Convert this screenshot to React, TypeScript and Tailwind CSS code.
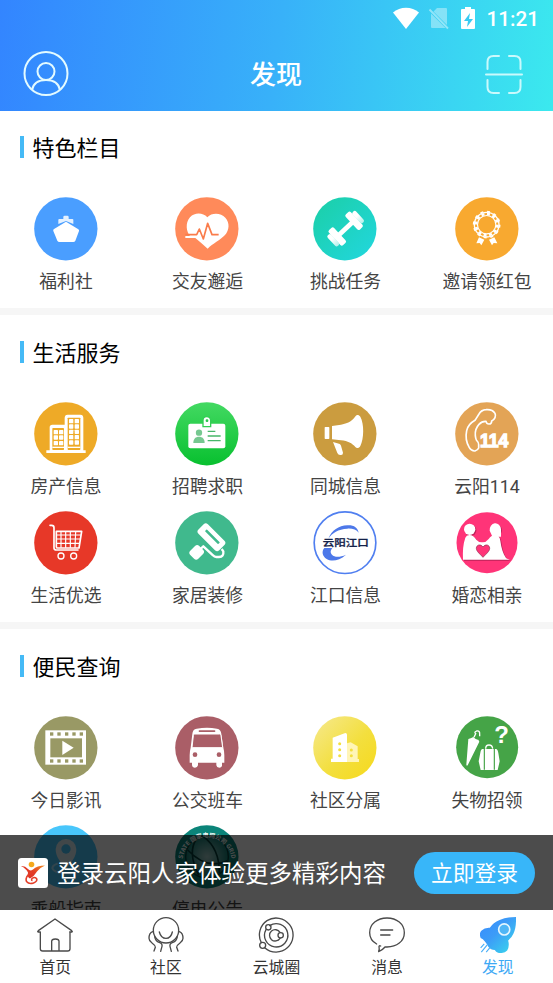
import type { ReactNode } from "react";

type Entry = { label: string; icon: ReactNode };

function Disc({ x, y, fill, children }: { x: number; y: number; fill: string; children?: ReactNode }) {
  return (
    <svg className="block size-16" viewBox={`${x} ${y} 192 192`}>
      <circle cx={x + 95.5} cy={y + 95.5} r="95" fill={fill} />
      {children}
    </svg>
  );
}

const ship = (
  <Disc x={101} y={216} fill="#4a9eff">
    <path d="M174 297v-13q0-2 3-2h12v-6q0-4 4-4h8q4 0 4 4v6h11q3 0 3 2v13l-22-9z" fill="#e4f1ff" />
    <path d="M197 290l37 23q3 2 2 5l-11 29q-2 4-6 4h-42q-4 0-6-4l-12-29q-1-3 1-5z" fill="#fff" />
  </Disc>
);

const heart = (
  <Disc x={525} y={216} fill="#ff8a5a">
    <path d="M622 277c14-15 41-13 54 1 14 15 12 38-1 52-14 15-37 26-52 41-14-13-25-22-37-32h-30v-6h14c-11-12-15-39 0-56 14-15 38-15 52 0z" fill="#fff" />
    <path d="M556 329h34l8-17 12 30 13-47 13 34h20" fill="none" stroke="#fa7c4b" strokeWidth="5" strokeLinejoin="round" />
  </Disc>
);

const dumbbell = (
  <Disc x={111} y={216} fill="url(#teal)">
    <defs>
      <linearGradient id="teal" x1="0" y1="0" x2="1" y2="1">
        <stop offset="0" stopColor="#1bcfa6" />
        <stop offset="1" stopColor="#22d7df" />
      </linearGradient>
      <linearGradient id="dumbShade" x1="0" y1="0" x2="0" y2="1">
        <stop offset="0.4" stopColor="#fff" />
        <stop offset="1" stopColor="#b4f0ea" />
      </linearGradient>
    </defs>
    <g transform="rotate(-43 209 311)" fill="#fff">
      <rect x="180" y="304" width="58" height="14" />
      <rect x="164" y="280" width="21" height="62" rx="6" />
      <rect x="233" y="280" width="21" height="62" rx="6" />
      <rect x="151" y="289" width="14" height="44" rx="6" fill="url(#dumbShade)" />
      <rect x="253" y="289" width="14" height="44" rx="6" fill="url(#dumbShade)" />
    </g>
  </Disc>
);

const medal = (
  <Disc x={536} y={216} fill="#f8a930">
    <g fill="none" stroke="#fff">
      <circle cx="631" cy="299" r="27.500" strokeWidth="3.500" />
      <circle cx="631" cy="299" r="37" strokeWidth="4" />
      <circle cx="631" cy="299" r="32" strokeWidth="8" strokeDasharray="9 7.750" />
      <circle cx="631" cy="299" r="39" strokeWidth="5" strokeDasharray="9 11.420" />
    </g>
    <path d="M608 337l16 7-9 17-5-7-10 1zM654 337l-16 7 9 17 5-7 11 1z" fill="#fff" />
  </Disc>
);

const buildings = (
  <Disc x={101} y={36} fill="#eeaa27">
    <path d="M138 181h10v-69q0-8 8-8h37v-20q0-10 9-10h38q9 0 9 10v97h7v8H138z" fill="#fff" />
    <g fill="#eeaa27">
      <rect x="156" y="114" width="35" height="66" rx="2" />
      <rect x="202" y="83" width="38" height="97" rx="2" />
    </g>
    <g fill="#fff">
      {[120, 136, 153].map((y) => [160, 176].map((x) => <rect key={`${x}-${y}`} x={x} y={y} width="13" height="13" rx="2" />))}
      {[87, 103, 119, 135, 151].map((y) => [206, 223].map((x) => <rect key={`${x}-${y}`} x={x} y={y} width="13" height="13" rx="2" />))}
      <rect x="156" y="170" width="35" height="4" />
      <rect x="202" y="170" width="38" height="4" />
    </g>
  </Disc>
);

const badge = (
  <Disc x={525} y={36} fill="url(#green)">
    <defs>
      <linearGradient id="green" x1="0" y1="0" x2="0" y2="1">
        <stop offset="0" stopColor="#43d962" />
        <stop offset="1" stopColor="#08c02f" />
      </linearGradient>
    </defs>
    <rect x="565" y="101" width="111" height="74" rx="6" fill="#fff" />
    <path d="M609 110V91q0-11 11-11t12 11v19z" fill="#fff" stroke="#33ce55" strokeWidth="4" />
    <rect x="617" y="88" width="8" height="8" rx="3" fill="#2fc650" />
    <g fill="#76c890">
      <circle cx="597" cy="128" r="9.500" />
      <path d="M580 159c0-13 7-19 17-19s17 6 17 19z" />
    </g>
    <path d="M623 124h23M623 138h39M623 152h39" stroke="#48b76a" strokeWidth="4" />
  </Disc>
);

const megaphone = (
  <Disc x={111} y={36} fill="#cb9c3f">
    <g fill="#fff">
      <rect x="146" y="111" width="14" height="36" rx="2" />
      <path d="M168 108l27-4c24-4 35-13 44-26 3-5 10-4 14 2 12 22 11 66 0 88-4 7-11 8-15 3-10-11-22-18-43-20l-27-3z" />
      <path d="M171 156l18 5c3 1 5 2 6 6l6 21q0 8-7 7-7 1-10-6z" />
    </g>
  </Disc>
);

const hotline = (
  <Disc x={536} y={36} fill="#e3a456">
    <path d="M596 91l12-19q7-12 21-13 19-2 27 11 3 6 0 13-3 7-10 10 0 10-9 9-6 0-8-8-12-1-21 9-13 14-11 34 1 9 3 13 7 7 7 14v10q-3 7-11 9-10 1-17-10-14-23-8-51 4-19 25-31z" fill="none" stroke="#fff" strokeWidth="5" strokeLinejoin="round" />
    <text x="611" y="170" fontSize="56" fontWeight="700" textLength="85" lengthAdjust="spacingAndGlyphs" stroke="#fff" strokeWidth="4" fill="#fff" className="font-['Liberation_Sans']">114</text>
  </Disc>
);

const cart = (
  <Disc x={101} y={33} fill="#e73828">
    <g fill="none" stroke="#fff" strokeLinecap="round" strokeLinejoin="round">
      <path d="M149 76h5q7 0 7 7v61q0 6 7 6h65" strokeWidth="5" />
      <path d="M168 94h76l-8 50h-64q-4 0-4-4z" strokeWidth="5" />
      <path d="M169 105h72M169 117h71M169 130h68M182 95v47M196 95v47M210 95v47M226 95l-2 47" strokeWidth="3.500" />
      <circle cx="182" cy="168" r="9" strokeWidth="4" />
      <circle cx="220" cy="168" r="9" strokeWidth="4" />
    </g>
  </Disc>
);

const roller = (
  <Disc x={525} y={33} fill="#40b98d">
    <g transform="rotate(45 635 111)">
      <rect x="591" y="92" width="88" height="40" rx="9" fill="#fff" />
      <rect x="608" y="105" width="56" height="8" rx="2" fill="#40b98d" />
    </g>
    <path d="M665 147l5 7q2 16-13 17h-8q-6 0-10-5l-29-27-12 11" fill="none" stroke="#fff" strokeWidth="7" strokeLinejoin="round" />
    <rect x="573" y="138" width="34" height="38" rx="9" transform="rotate(45 590 157)" fill="#fff" />
  </Disc>
);

const jiangkou = (
  <Disc x={111} y={33} fill="#fff">
    <circle cx="207" cy="128" r="92.500" fill="none" stroke="#507ff0" strokeWidth="5" />
    <path d="M157 116c10-25 31-39 57-40 20-1 31 7 34 22-7-9-19-13-34-12-27 1-46 13-57 30z" fill="#4d78e9" />
    <path d="M145 144c-9 10-6 25 7 33 15 9 37 6 58-13-18 8-34 9-42 0-7-7-3-15 1-20z" fill="#4d78e9" />
    <g transform="translate(140 139) scale(1 .85)">
      <text fontSize="34" fontWeight="500" textLength="138" lengthAdjust="spacingAndGlyphs" fill="#132149" stroke="#132149" strokeWidth="1" className="font-['Noto_Sans_CJK_SC']">云阳江口</text>
    </g>
  </Disc>
);

const couple = (
  <svg className="block size-16" viewBox="536 33 192 192">
    <circle cx="632" cy="128" r="91.500" fill="#ff3478" />
    <g transform="translate(3 3)" fill="#8f1643" opacity=".6">
      <circle cx="580" cy="88" r="17" />
      <circle cx="657" cy="88" r="17" />
      <path d="M560 179c-1-26 0-46 7-66q3-8 12-8c9 0 15 5 21 14q8 9 18 8 10 1 19-10 8-12 20-12 13 0 15 17c3 22 8 38 17 52q4 4 12 5z" />
    </g>
    <g fill="#fff">
      <circle cx="580" cy="88" r="17" />
      <path d="M640 92a17 20 0 1 1 34-4v22h-26q-4-10-8-18z" />
      <path d="M560 179c-1-26 0-46 7-66q3-8 12-8c9 0 15 5 21 14q8 9 18 8 10 1 19-10 8-12 20-12 13 0 15 17c3 22 8 38 17 52q4 4 12 5z" />
    </g>
    <path d="M620 172c-9-10-20-18-20-27 0-11 13-14 20-4 7-10 20-7 20 4 0 9-11 17-20 27z" fill="#ff3478" stroke="#8d2149" strokeWidth="2" />
  </svg>
);

const film = (
  <Disc x={101} y={48} fill="#999965">
    <rect x="135" y="91" width="122" height="103" fill="#fff" />
    <rect x="150" y="115" width="95" height="57" fill="#999965" />
    {[149, 171, 194, 216, 238].map((x) => (
      <g key={x} fill="#999965">
        <rect x={x} y="97" width="10" height="10" />
        <rect x={x} y="178" width="10" height="10" />
      </g>
    ))}
    <path d="M186 122l34 21-34 22z" fill="#fff" />
  </Disc>
);

const bus = (
  <Disc x={525} y={48} fill="#aa5e67">
    <path d="M569 188v-22q0-13 3-23l5-41q1-15 13-16 31-5 61 0 12 2 13 16l6 41q3 10 3 23v22h-7v10q-2 5-8 5-8 0-9-7v-8h-55v8q-2 7-9 7-8 0-9-8v-7z" fill="#fff" />
    <path d="M584 102h75q3 0 4 5l5 36h-92l4-36q0-5 4-5z" fill="#aa5e67" stroke="#fff" strokeWidth="3" />
    <rect x="596" y="91" width="50" height="5" rx="2" fill="#aa5e67" />
    <circle cx="585" cy="164" r="7" fill="#aa5e67" />
    <circle cx="657" cy="164" r="7" fill="#aa5e67" />
  </Disc>
);

const community = (
  <Disc x={111} y={48} fill="url(#yellow)">
    <defs>
      <linearGradient id="yellow" x1="0" y1="0" x2="1" y2="1">
        <stop offset="0" stopColor="#f6e990" />
        <stop offset="0.55" stopColor="#f3df3e" />
        <stop offset="1" stopColor="#f6d91b" />
      </linearGradient>
    </defs>
    <path d="M213 186v-56l11-3 21 12v38h4v9z" fill="#fff5b7" />
    <path d="M165 186v-10h5v-63l38-14q5 0 5 5v82z" fill="#fff" />
    <g fill="#f3df3e">
      {[131, 149, 167].map((y) => <circle key={y} cx="191" cy={y} r="4.500" />)}
      {[150, 167].map((y) => <circle key={y} cx="226" cy={y} r="4.500" />)}
    </g>
  </Disc>
);

const lost = (
  <svg className="block size-16" viewBox="536 48 192 192">
    <circle cx="632.500" cy="141.500" r="93" fill="#45a447" />
    <path d="M576 117q7-1 15-6 8 9 15 8l3 6-35 71q-3 3-4-2z" fill="#fff" />
    <path d="M593 112l5-11q-6-4 3-8 10-2 9 10v6" fill="none" stroke="#fff" strokeWidth="4" />
    <path d="M618 147h41q5 0 7 12l4 25-6 26h-51l-6-26 5-26q2-11 6-11z" fill="#fff" />
    <path d="M628 146q0-11 10-11t11 11" fill="none" stroke="#fff" strokeWidth="4" />
    <path d="M624 145v64M654 145v64" stroke="#45a447" strokeWidth="3.500" />
    <text x="654" y="130" fontSize="72" fontWeight="700" fill="#fff" className="font-['Liberation_Sans']">?</text>
  </svg>
);

const pin = (
  <Disc x={101} y={30} fill="#48c6fb">
    <path d="M197 161c-17-21-31-35-31-58a31 31 0 0 1 62 0c0 23-14 37-31 58z" fill="#d9edf5" />
    <circle cx="197" cy="102" r="14" fill="#48c6fb" />
    <path d="M172 145c-35 15-5 30 25 30s60-15 25-30" fill="none" stroke="#a9e5ff" strokeWidth="6" />
  </Disc>
);

const grid = (
  <Disc x={525} y={30} fill="#0b8479">
    <defs>
      <path id="gridArc" d="M547 141a74 74 0 1 1 148 0" />
      <radialGradient id="globe">
        <stop offset="0" stopColor="#a0c8c5" />
        <stop offset="1" stopColor="#147c73" />
      </radialGradient>
    </defs>
    <circle cx="621" cy="125" r="64" fill="url(#globe)" stroke="#063e39" strokeWidth="4" />
    <path d="M590 71q-29 40 6 109M563 105q59 62 119 32M609 64q50 35 49 111" fill="none" stroke="#063e39" strokeWidth="5" />
    <text fontSize="18" fontWeight="700" fill="#fff" className="font-['Noto_Sans_CJK_SC']">
      <textPath href="#gridArc" startOffset="50%" textAnchor="middle">STATE 国家电网公司 GRID</textPath>
    </text>
  </Disc>
);

const sections: { title: string; entries: Entry[] }[] = [
  {
    title: "特色栏目",
    entries: [
      { label: "福利社", icon: ship },
      { label: "交友邂逅", icon: heart },
      { label: "挑战任务", icon: dumbbell },
      { label: "邀请领红包", icon: medal },
    ],
  },
  {
    title: "生活服务",
    entries: [
      { label: "房产信息", icon: buildings },
      { label: "招聘求职", icon: badge },
      { label: "同城信息", icon: megaphone },
      { label: "云阳114", icon: hotline },
      { label: "生活优选", icon: cart },
      { label: "家居装修", icon: roller },
      { label: "江口信息", icon: jiangkou },
      { label: "婚恋相亲", icon: couple },
    ],
  },
  {
    title: "便民查询",
    entries: [
      { label: "今日影讯", icon: film },
      { label: "公交班车", icon: bus },
      { label: "社区分属", icon: community },
      { label: "失物招领", icon: lost },
      { label: "乘船指南", icon: pin },
      { label: "停电公告", icon: grid },
    ],
  },
];

function Section({ title, entries, first }: { title: string; entries: Entry[]; first: boolean }) {
  return (
    <section className={first ? "h-[197px] shrink-0" : "shrink-0 border-t-[7px] border-[#f6f6f6] pb-[2px]"}>
      <div className={first ? "flex h-[86px] items-start pt-[20px] pl-5" : "flex h-[87px] items-start pt-[21px] pl-5"}>
        <div className="flex h-8 items-center gap-[8.500px]">
          <span className="h-[22px] w-1 bg-[#45baf6]" />
          <h2 className="pt-1 text-[22px] leading-8 text-black">{title}</h2>
        </div>
      </div>
      <div className="grid auto-rows-[109px] grid-cols-[141.500px_138px_141.500px_90px] pl-[20.500px]">
        {entries.map((e) => (
          <div key={e.label} className="flex w-[90px] flex-col items-center">
            {e.icon}
            <span className="mt-2 pl-[1px] text-[17.800px] leading-[25px] whitespace-nowrap text-[#444]">{e.label}</span>
          </div>
        ))}
      </div>
    </section>
  );
}

function TabIcon({ box, children }: { box: string; children: ReactNode }) {
  return (
    <svg className="block size-9" viewBox={box} fill="none" stroke="#4a4a4a" strokeWidth="4" strokeLinecap="round" strokeLinejoin="round">
      {children}
    </svg>
  );
}

const tabs: Entry[] = [
  {
    label: "首页",
    icon: (
      <TabIcon box="111 305 108 108">
        <path d="M121 350h-6q-4-1 0-4l50-35 50 35q4 3 0 4h-6M121 350v50q0 7 7 7h75q7 0 7-7v-50M155 406v-28q0-7 11-7t11 7v28" />
      </TabIcon>
    ),
  },
  {
    label: "社区",
    icon: (
      <TabIcon box="443 305 108 108">
        <circle cx="497" cy="345" r="38" />
        <path d="M477 350q5 19 20 19t19-19" />
        <path d="M457 349q-11 4-11 20 0 8 9 14 10 7 10 13l-4 11M463 364q3 15 13 17 11 3 9 12l-4 15M537 349q11 4 11 20 0 8-9 14-10 7-10 13l4 11M531 364q-3 15-13 17-11 3-9 12l4 15" />
      </TabIcon>
    ),
  },
  {
    label: "云城圈",
    icon: (
      <TabIcon box="776 305 108 108">
        <path d="M786 382a51 51 0 0 1 17-66 51 51 0 1 1-7 81" />
        <path d="M811 331a35 35 0 1 1-11 12" />
        <circle cx="807" cy="336" r="8" />
        <circle cx="790" cy="390" r="9" />
        <path d="M842 351a17 17 0 1 0 0 18" />
        <circle cx="844" cy="360" r="8" />
      </TabIcon>
    ),
  },
  {
    label: "消息",
    icon: (
      <TabIcon box="279 305 108 108">
        <path d="M302 386q-21-12-21-34c0-26 23-44 52-44s52 18 52 44-23 43-52 43h-6q-8 10-19 14 3-5 1-15 0-4 5-2M314 344h36M314 359h28" />
      </TabIcon>
    ),
  },
  {
    label: "发现",
    icon: (
      <svg className="block size-9" viewBox="610 303 110 110">
        <defs>
          <linearGradient id="rocket" x1="0" y1="0" x2="1" y2="1">
            <stop offset="0" stopColor="#378aff" />
            <stop offset="0.45" stopColor="#3c9cf7" />
            <stop offset="1" stopColor="#38ddec" />
          </linearGradient>
        </defs>
        <path d="M612 367q-6-14 3-23 9-9 25-8 10-16 30-24 20-9 50-9 1 34-8 51-5 12-16 21 5 18-3 30-9 11-28 7-6-2-10-8-12 0-19-9-5-10-11-17-6-9-13-11z" fill="url(#rocket)" />
        <circle cx="684" cy="341" r="17" fill="#4fb6f6" stroke="#e4f6ff" strokeWidth="5" />
        <path d="M623 385l-11 12M632 388l-18 22M641 396l-12 14" stroke="#49aff8" strokeWidth="3.500" />
      </svg>
    ),
  },
];

function StatusBar() {
  return (
    <div className="flex h-[38px] items-center justify-end pr-[14px] text-white">
      <svg className="mr-[8px] h-6 w-7" viewBox="0 0 28 24">
        <path d="M1 5.500C8-1 20-1 27 5.500L14 22z" fill="#fff" />
      </svg>
      <svg className="mr-[10px] h-6 w-[22px]" viewBox="0 0 22 24">
        <path d="M9 1h9q1 0 1 1v16L5.500 4.500zM3 6.500L17.500 21H4q-1 0-1-1z" fill="#fff" opacity=".38" />
        <path d="M1.500 2.500l18.500 19" stroke="#fff" strokeOpacity=".45" strokeWidth="1.800" />
      </svg>
      <svg className="mr-[11px] h-6 w-4" viewBox="0 0 16 24">
        <path d="M5 0h6v2h3q1 0 1 1v18q0 1-1 1H2q-1 0-1-1V3q0-1 1-1h3z" fill="#fff" />
        <path d="M10 6l-6 8h4l-1 6 6-8H9z" fill="#38cbf2" />
      </svg>
      <span className="text-[20.700px] leading-6 font-medium">11:21</span>
    </div>
  );
}

export default function App() {
  return (
    <div className="flex h-[983px] w-[553px] flex-col overflow-hidden bg-white font-[Roboto,'Noto_Sans_CJK_SC',sans-serif]">
      <header className="h-[111px] shrink-0 bg-linear-[97deg,#3385ff_0%,#38b1f9_50%,#3be9ee_100%]">
        <StatusBar />
        <div className="grid h-[73px] grid-cols-[1fr_auto_1fr] items-start pt-[13px] pr-[30px] pl-[23px]">
          <svg className="size-[46px]" viewBox="0 0 46 46" fill="none" stroke="#e3fbff" strokeWidth="2">
            <circle cx="23" cy="22.500" r="21.500" />
            <circle cx="23" cy="20.500" r="8.500" />
            <path d="M9 39q2-10 14-10t14 10" />
          </svg>
          <h1 className="pt-[6px] pl-[6px] text-[26px] leading-9 font-medium text-white">发现</h1>
          <svg className="mt-[4px] h-[39px] w-[38px] justify-self-end" viewBox="0 0 38 39" fill="none" stroke="#caf9fc" strokeWidth="2" strokeLinecap="round">
            <path d="M2.500 14V7q0-6 6-6H14M24 1h5.500q6 0 6 6v7M2.500 25v7q0 6 6 6H14M24 38h5.500q6 0 6-6v-7M1 19.500h36" />
          </svg>
        </div>
      </header>

      <main className="relative flex h-[799px] shrink-0 flex-col overflow-hidden">
        {sections.map((s, i) => (
          <Section key={s.title} title={s.title} entries={s.entries} first={i === 0} />
        ))}
        <div className="absolute inset-x-0 bottom-0 flex h-[75px] items-center bg-black/70 pr-[18px] pl-[18px]">
          <svg className="size-[30px] shrink-0" viewBox="0 0 30 30">
            <defs>
              <linearGradient id="flame" x1="1" y1="0" x2="0" y2="1">
                <stop offset="0" stopColor="#f08b20" />
                <stop offset="0.5" stopColor="#e23a25" />
                <stop offset="1" stopColor="#df3025" />
              </linearGradient>
            </defs>
            <rect width="30" height="30" rx="3.500" fill="#fff" />
            <circle cx="13.500" cy="6.500" r="2.800" fill="#f5a91d" />
            <path d="M3 8q4-.5 7 3 2 2.500 5 .5 4-4 12-4-5 2-8 6-3 5-7 7-3-1-2-6Q8 10.500 3 8z" fill="url(#flame)" />
            <path d="M11 16q-4 4-2.500 7.500 2.500 3 7 1.500 4.500-2 3-4.500-2-2-4.500 0-1 2 .5 2m-6-3q2-4 6-6" fill="none" stroke="#e43e28" strokeWidth="1.600" />
          </svg>
          <p className="ml-[9px] flex-1 pt-[2px] text-[23.500px] leading-8 whitespace-nowrap text-white">登录云阳人家体验更多精彩内容</p>
          <button className="h-[42px] w-[121px] rounded-full bg-[#38b6f9] pt-[2px] text-[21.800px] leading-8 text-white">立即登录</button>
        </div>
      </main>

      <nav className="grid h-[73px] shrink-0 grid-cols-5 bg-white pt-[7px]">
        {tabs.map((t, i) => (
          <div key={t.label} className="flex flex-col items-center">
            {t.icon}
            <span className={i === 4 ? "mt-1 text-[15.800px] leading-[22px] text-[#3ea9f5]" : "mt-1 text-[15.800px] leading-[22px] text-[#333]"}>{t.label}</span>
          </div>
        ))}
      </nav>
    </div>
  );
}
